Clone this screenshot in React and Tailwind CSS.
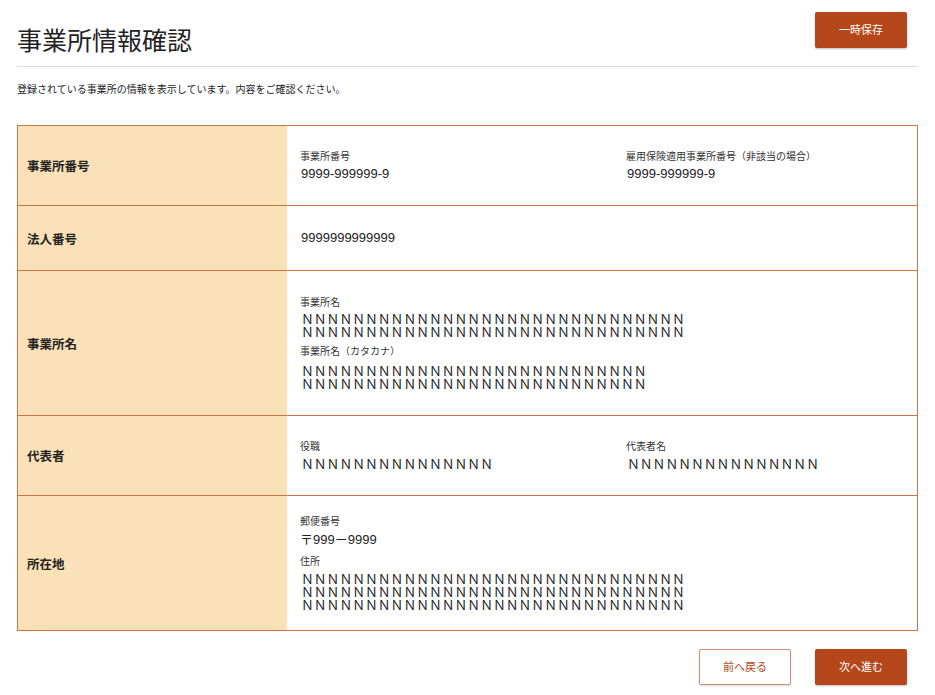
const ZEN_N = (count) => "Ｎ".repeat(count);

const Label = ({ children, className = "" }) => (
  <div className={`text-[10px] leading-[14px] text-[#333] ${className}`}>{children}</div>
);

const Value = ({ children, className = "" }) => (
  <div className={`text-[13px] leading-[16px] text-[#222] ${className}`}>{children}</div>
);

// multi-line placeholder text kept in one text node
const NLines = ({ lines, count, className = "" }) => (
  <div className={`text-[12.8px] leading-[13px] text-[#222] pl-[1px] whitespace-pre-line ${className}`}>
    {Array.from({ length: lines }, () => ZEN_N(count)).join("\n")}
  </div>
);

const Row = ({ title, height, last, children }) => (
  <div className={`flex ${height} ${last ? "" : "border-b border-[#cc7448]"}`}>
    <div className="w-[269px] shrink-0 bg-[#fae1b7] flex items-center pl-[9px] pt-[4px] text-[12.5px] font-bold text-[#222]">
      {title}
    </div>
    <div className="flex-1 flex flex-col justify-center pl-[13px]">{children}</div>
  </div>
);

const App = () => {
  return (
    <div
      className="w-[935px] h-[695px] bg-white px-[17px] pt-[12px]"
      style={{ fontFamily: '"Liberation Sans", "Noto Sans CJK JP", sans-serif' }}
    >
      {/* Header */}
      <div className="h-[55px] flex justify-between items-start border-b border-[#dcdcdc]">
        <h1 className="mt-[11px] text-[25px] leading-[36px] font-normal text-[#222]">事業所情報確認</h1>
        <button className="mr-[11px] w-[92px] h-[36px] bg-[#b5471b] text-white text-[11px] rounded-[2px] shadow-[0_1px_2px_rgba(0,0,0,0.25)]">
          一時保存
        </button>
      </div>

      <p className="mt-[15px] text-[10px] leading-[16px] text-[#222]">
        登録されている事業所の情報を表示しています。内容をご確認ください。
      </p>

      {/* Table */}
      <div className="mt-[27px] border border-[#cc7448]">
        <Row title="事業所番号" height="h-[80px]">
          <div className="flex">
            <div className="w-[326px]">
              <Label>事業所番号</Label>
              <Value className="mt-[2px] pl-[1px]">9999-999999-9</Value>
            </div>
            <div>
              <Label>雇用保険適用事業所番号（非該当の場合）</Label>
              <Value className="mt-[2px] pl-[1px]">9999-999999-9</Value>
            </div>
          </div>
        </Row>

        <Row title="法人番号" height="h-[65px]">
          <Value className="pl-[1px]">9999999999999</Value>
        </Row>

        <Row title="事業所名" height="h-[145px]">
          <Label>事業所名</Label>
          <NLines lines={2} count={30} className="mt-[3px]" />
          <Label className="mt-[6px]">事業所名（カタカナ）</Label>
          <NLines lines={2} count={27} className="mt-[6px]" />
        </Row>

        <Row title="代表者" height="h-[80px]">
          <div className="flex">
            <div className="w-[326px]">
              <Label>役職</Label>
              <NLines lines={1} count={15} className="mt-[4px]" />
            </div>
            <div>
              <Label>代表者名</Label>
              <NLines lines={1} count={15} className="mt-[4px]" />
            </div>
          </div>
        </Row>

        <Row title="所在地" height="h-[134px]" last>
          <Label>郵便番号</Label>
          <Value className="mt-[3px]">〒999－9999</Value>
          <Label className="mt-[7px]">住所</Label>
          <NLines lines={3} count={30} className="mt-[4px]" />
        </Row>
      </div>

      {/* Footer buttons */}
      <div className="mt-[18px] flex justify-end gap-[24px] pr-[11px]">
        <button className="w-[92px] h-[36px] bg-white border border-[#c4907a] text-[#b5471b] text-[11px] rounded-[2px] shadow-[0_1px_2px_rgba(0,0,0,0.15)]">
          前へ戻る
        </button>
        <button className="w-[92px] h-[36px] bg-[#b5471b] text-white text-[11px] rounded-[2px] shadow-[0_1px_2px_rgba(0,0,0,0.25)]">
          次へ進む
        </button>
      </div>
    </div>
  );
};

export default App;
